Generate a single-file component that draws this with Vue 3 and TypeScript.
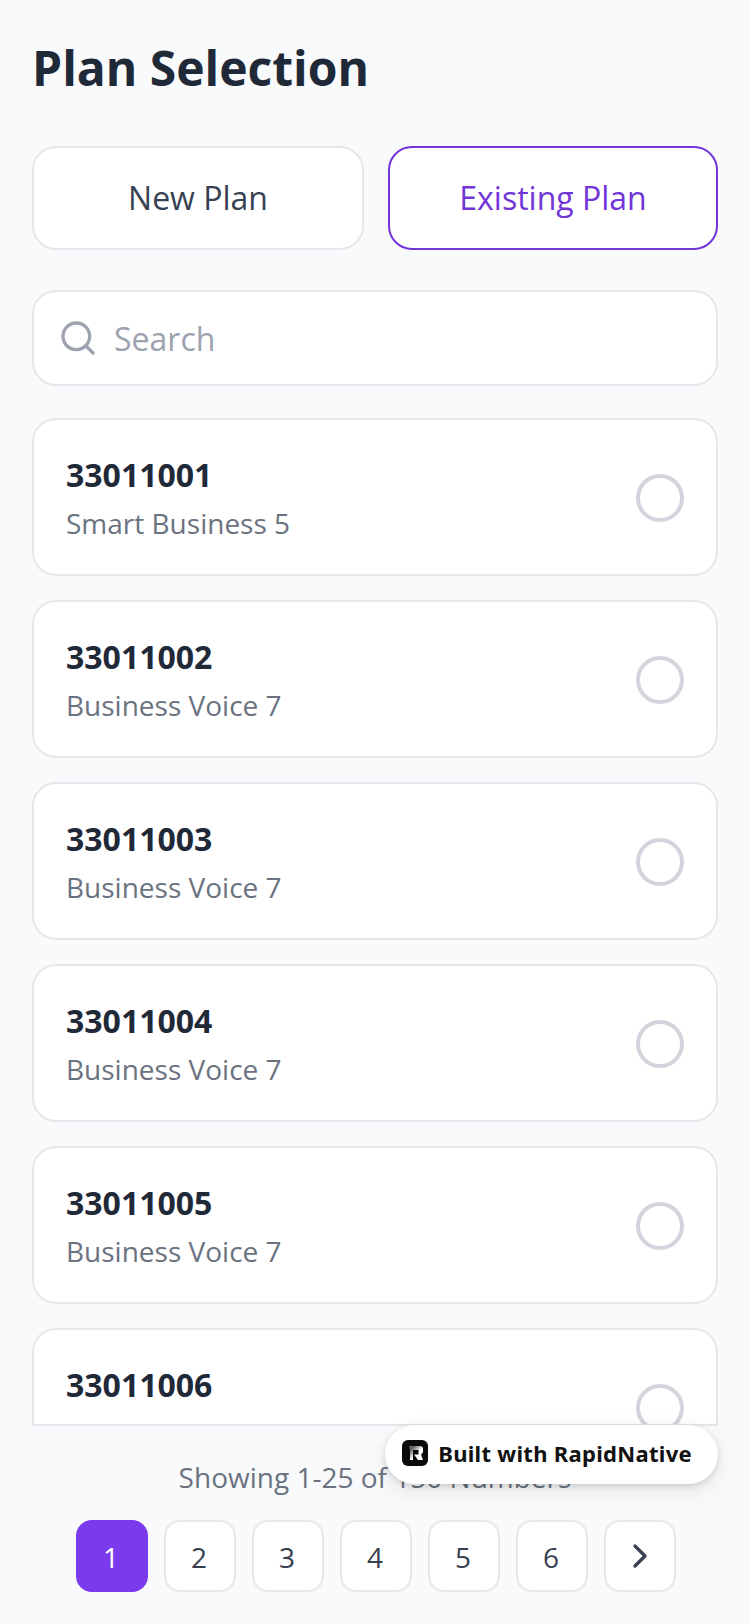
<template>
  <div class="screen">
    <div class="top">
      <h1 class="title">Plan Selection</h1>
      <div class="tabs">
        <button class="tab">New Plan</button>
        <button class="tab active">Existing Plan</button>
      </div>
      <div class="search">
        <svg class="search-icon" width="40" height="40" viewBox="0 0 24 24" fill="none" stroke="#9ca3af" stroke-width="2" stroke-linecap="round" stroke-linejoin="round">
          <circle cx="11" cy="11" r="8" />
          <path d="m21 21-4.3-4.3" />
        </svg>
        <span class="placeholder">Search</span>
      </div>
    </div>

    <div class="list">
      <div v-for="plan in plans" :key="plan.number" class="card">
        <div>
          <div class="number">{{ plan.number }}</div>
          <div class="name">{{ plan.name }}</div>
        </div>
        <span class="radio"></span>
      </div>
    </div>

    <div class="footer">
      <div class="showing">Showing 1-25 of 150 Numbers</div>
      <div class="pager">
        <button v-for="p in pages" :key="p" class="page" :class="{ current: p === 1 }">{{ p }}</button>
        <button class="page next">
          <svg width="40" height="40" viewBox="0 0 24 24" fill="none" stroke="#374151" stroke-width="2" stroke-linecap="round" stroke-linejoin="round">
            <path d="m9 18 6-6-6-6" />
          </svg>
        </button>
      </div>
    </div>

    <div class="badge">
      <span class="badge-logo">
        <svg width="26" height="26" viewBox="0 0 26 26">
          <defs>
            <linearGradient id="rn" x1="0" y1="0" x2="1" y2="1">
              <stop offset="0.2" stop-color="#666" />
              <stop offset="0.55" stop-color="#fff" />
            </linearGradient>
          </defs>
          <path d="M7 6h11a3 3 0 0 1 3 3v2.5a3 3 0 0 1-2 2.8L21 20h-5l-4-5.5h4.5V10H11v10H8v-10z" fill="url(#rn)" />
        </svg>
      </span>
      <span class="badge-text">Built with RapidNative</span>
    </div>
  </div>
</template>

<script setup lang="ts">
interface Plan {
  number: string;
  name: string;
}

const plans: Plan[] = [
  { number: '33011001', name: 'Smart Business 5' },
  { number: '33011002', name: 'Business Voice 7' },
  { number: '33011003', name: 'Business Voice 7' },
  { number: '33011004', name: 'Business Voice 7' },
  { number: '33011005', name: 'Business Voice 7' },
  { number: '33011006', name: 'Smart Business 5' },
];

const pages = [1, 2, 3, 4, 5, 6];
</script>

<style>
html,
body {
  margin: 0;
  background: #f9fafb;
}
</style>

<style scoped>
.screen {
  position: relative;
  width: 750px;
  height: 1624px;
  display: flex;
  flex-direction: column;
  overflow: hidden;
  background: #f9fafb;
  font-family: 'Open Sans', 'Noto Sans', sans-serif;
}

.top {
  padding: 32px 32px 0;
}

.title {
  margin: 0;
  font-size: 48px;
  line-height: 71px;
  font-weight: 700;
  color: #1f2937;
}

.tabs {
  display: flex;
  gap: 24px;
  margin-top: 43px;
}

.tab {
  flex: none;
  width: 332px;
  height: 104px;
  padding: 0 0 2px;
  border: 2px solid #e5e7eb;
  border-radius: 24px;
  background: #fff;
  font: inherit;
  font-size: 32px;
  color: #374151;
}

.tab.active {
  width: 330px;
  border-color: #7135d8;
  color: #7135d8;
}

.search {
  display: flex;
  align-items: center;
  height: 96px;
  box-sizing: border-box;
  margin-top: 40px;
  padding: 0 24px;
  border: 2px solid #e5e7eb;
  border-radius: 24px;
  background: #fff;
}

.placeholder {
  margin-left: 16px;
  font-size: 32px;
  color: #9ca3af;
}

.list {
  flex: 1;
  min-height: 0;
  margin: 32px 32px 0;
  overflow: hidden;
  display: flex;
  flex-direction: column;
  gap: 24px;
}

.card {
  flex: none;
  height: 158px;
  box-sizing: border-box;
  display: flex;
  align-items: center;
  justify-content: space-between;
  padding: 2px 32px 0;
  border: 2px solid #e5e7eb;
  border-radius: 24px;
  background: #fff;
}

.number {
  font-size: 32px;
  line-height: 48px;
  font-weight: 700;
  color: #1f2937;
}

.name {
  margin-top: 2px;
  font-size: 28px;
  line-height: 44px;
  color: #6b7280;
}

.radio {
  width: 48px;
  height: 48px;
  box-sizing: border-box;
  border: 4px solid #d1d5db;
  border-radius: 50%;
}

.footer {
  flex: none;
  height: 200px;
  box-sizing: border-box;
  padding-top: 31px;
  margin: 0 32px;
  border-top: 2px solid #e5e7eb;
}

.showing {
  text-align: center;
  font-size: 28px;
  line-height: 40px;
  color: #6b7280;
}

.pager {
  display: flex;
  justify-content: center;
  gap: 16px;
  margin-top: 23px;
  padding-left: 2px;
}

.page {
  width: 72px;
  height: 72px;
  padding: 2px 2px 0 0;
  display: flex;
  align-items: center;
  justify-content: center;
  border: 2px solid #e5e7eb;
  border-radius: 16px;
  background: #fff;
  font: inherit;
  font-size: 28px;
  color: #374151;
}

.page.next {
  padding: 0;
}

.page.current {
  border-color: #7c3aed;
  background: #7c3aed;
  color: #fff;
}

.badge {
  position: absolute;
  right: 32px;
  top: 1425px;
  height: 59px;
  box-sizing: border-box;
  display: flex;
  align-items: center;
  gap: 10px;
  padding: 0 26px 3px 17px;
  border-radius: 30px;
  background: #fff;
  box-shadow: 0 2px 6px rgba(0, 0, 0, 0.14), 0 8px 24px rgba(0, 0, 0, 0.08);
}

.badge-logo {
  width: 26px;
  height: 26px;
  border-radius: 6px;
  background: #0a0a0a;
  display: flex;
}

.badge-text {
  font-size: 22px;
  font-weight: 700;
  letter-spacing: 0.3px;
  color: #111;
  font-family: 'Noto Sans', sans-serif;
}
</style>
